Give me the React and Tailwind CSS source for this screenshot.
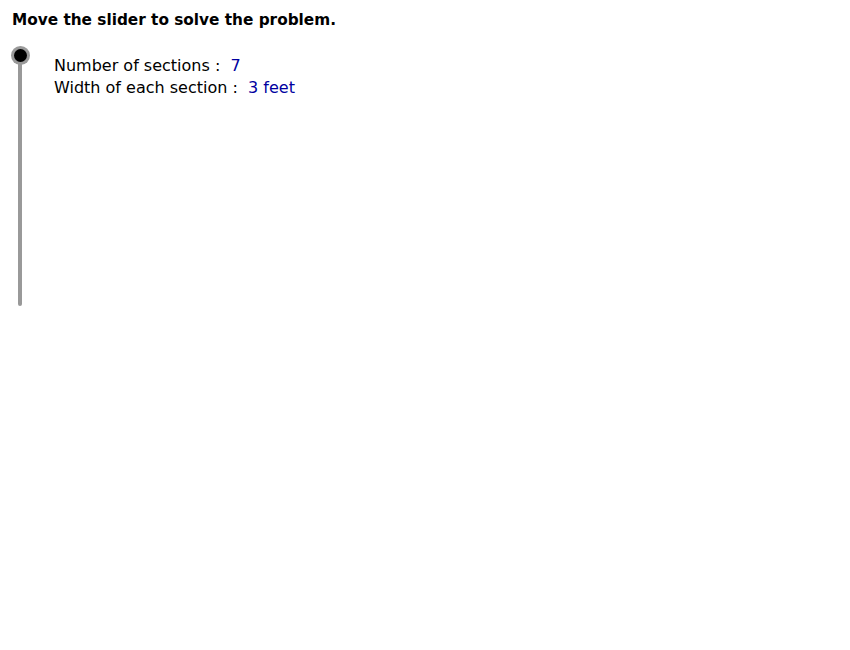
export default function App() {
  const sections = 7;
  const width = 3;

  return (
    <div className="w-[850px] h-[650px] bg-white font-['DejaVu_Sans',sans-serif] text-black">
      <h1 className="pl-3 pt-[10px] text-[15.3px] font-bold leading-5">
        Move the slider to solve the problem.
      </h1>
      <div className="flex mt-[15px] pl-[10px]">
        {/* vertical slider: knob on top of the track */}
        <div className="relative w-5 h-[256px] mt-[1px] flex justify-center">
          <div className="w-1 h-full bg-[#999999] rounded-full mt-[4px]" />
          <div className="absolute top-0 left-[0.5px] w-[19px] h-[19px] rounded-full bg-[#999999] flex items-center justify-center">
            <div className="w-[13px] h-[13px] rounded-full bg-black" />
          </div>
        </div>
        <div className="ml-6 mt-[10px] text-[16px] leading-[22px]">
          <p>
            Number of sections :&nbsp; <span className="text-[#0000a0]">{sections}</span>
          </p>
          <p>
            Width of each section :&nbsp; <span className="text-[#0000a0]">{width} feet</span>
          </p>
        </div>
      </div>
    </div>
  );
}
